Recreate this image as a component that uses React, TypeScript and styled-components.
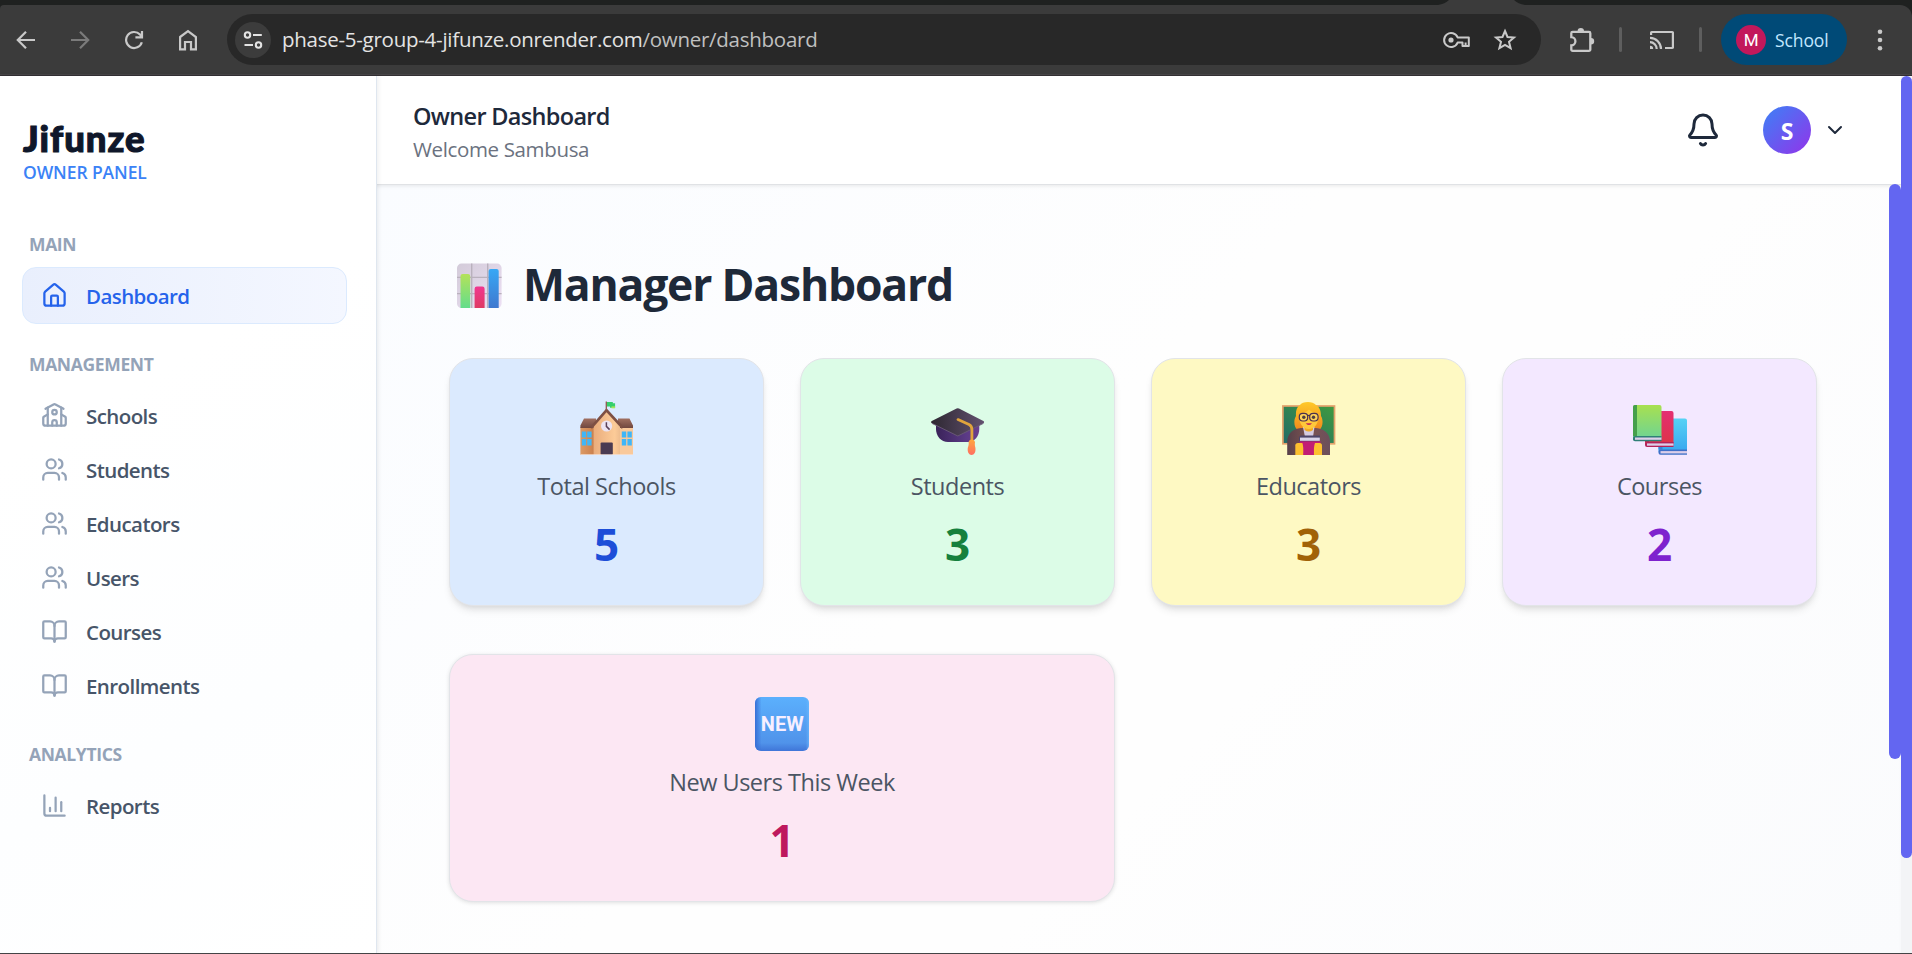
import React from 'react';
import styled, { createGlobalStyle } from 'styled-components';
import {
  Bell,
  BookOpen,
  ChartColumn,
  ChevronDown,
  House,
  School,
  Users,
  type LucideIcon,
} from 'lucide-react';

const GlobalStyle = createGlobalStyle`
  *, *::before, *::after { box-sizing: border-box; }
  body {
    margin: 0;
    overflow: hidden;
    background: #ffffff;
    font-family: "Open Sans", "Noto Sans", sans-serif;
  }
`;

/* ---------- browser chrome ---------- */

const Screen = styled.div`
  display: flex;
  flex-direction: column;
  width: 100vw;
  height: 954px;
  overflow: hidden;
  border-bottom: 1px solid #444446;
`;

const TabStrip = styled.div`
  flex: none;
  height: 5px;
  padding-left: 1438px;
  background: #1f2120;
`;

const ActiveTabFoot = styled.svg`
  display: block;
`;

const ToolbarBack = styled.div`
  flex: none;
  background: #1f2120;
`;

const Toolbar = styled.div`
  display: flex;
  align-items: center;
  height: 71px;
  padding-bottom: 2px;
  background: #3b3b3b;
  border-radius: 4px 12px 0 0;
  box-shadow: inset 0 -1px 0 #333033, inset 0 -2px 0 #474547;
`;

const ToolbarIcon = styled.span<{ $dim?: boolean; $first?: boolean }>`
  flex: none;
  display: flex;
  align-items: center;
  justify-content: center;
  width: 54px;
  height: 54px;
  margin-left: ${(p) => (p.$first ? '-1px' : '0')};
  color: ${(p) => (p.$dim ? '#7b7b7b' : '#c9c9c9')};
`;

const AddressBar = styled.div`
  display: flex;
  align-items: center;
  width: 1314px;
  height: 51px;
  margin: 0 14px 0 12px;
  padding: 0 12px 0 8px;
  border-radius: 26px;
  background: #282828;
`;

const SiteInfo = styled.span`
  display: flex;
  align-items: center;
  justify-content: center;
  width: 36px;
  height: 36px;
  border-radius: 50%;
  background: #3c3c3c;
`;

const Url = styled.span`
  flex: 1;
  padding: 0 0 2px 11px;
  font-size: 20.5px;
  line-height: 28px;
  letter-spacing: -0.26px;
  color: #e3e3e3;
`;

const UrlPath = styled.span`
  color: #c0c0c0;
`;

const AddressAction = styled.span`
  display: flex;
  justify-content: center;
  width: 48px;
  color: #c9c9c9;
`;

const Divider = styled.span`
  flex: none;
  width: 3px;
  height: 25px;
  margin: 0 0 0 10px;
  border-radius: 2px;
  background: #5e5e5e;
`;

const CastCell = styled(ToolbarIcon)`
  margin-left: 13px;
`;

const ProfileChip = styled.div`
  display: flex;
  align-items: center;
  gap: 9px;
  width: 126px;
  height: 51px;
  margin-left: 19px;
  padding-left: 15px;
  border-radius: 26px;
  background: #004a77;
  color: #c2e7ff;
  font-size: 17.5px;
  letter-spacing: -0.1px;
`;

const ProfileInitial = styled.span`
  display: flex;
  align-items: center;
  justify-content: center;
  width: 30px;
  height: 30px;
  border-radius: 50%;
  background: #c2185b;
  color: #ffffff;
  font: 400 17px Roboto, sans-serif;
`;

const MenuCell = styled(ToolbarIcon)`
  margin-left: 6px;
`;

/* ---------- page shell ---------- */

const Page = styled.div`
  display: flex;
  flex: 1;
  min-height: 0;
`;

const Sidebar = styled.aside`
  flex: none;
  z-index: 2;
  display: flex;
  flex-direction: column;
  width: 377px;
  padding: 40px 29px 0 22px;
  border-right: 1px solid #dfe6ef;
  background: linear-gradient(150deg, #ffffff 0%, #ffffff 35%, #fdfeff 70%, #ffffff 100%);
  box-shadow: 1px 0 5px rgba(15, 23, 42, 0.08);
`;

const Brand = styled.div`
  padding-left: 1px;
  font-family: Lato, "Open Sans", sans-serif;
  font-size: 36.5px;
  font-weight: 900;
  line-height: 44px;
  letter-spacing: 1px;
  color: #0f172a;
  -webkit-text-stroke: 1.1px #0f172a;
`;

const BrandSub = styled.div`
  padding-left: 1px;
  font-size: 17.5px;
  font-weight: 600;
  line-height: 24px;
  letter-spacing: -0.1px;
  color: #3b82f6;
`;

const NavLabel = styled.div<{ $top: number }>`
  margin-top: ${(p) => p.$top}px;
  height: 24px;
  padding-left: 7px;
  font-size: 17.5px;
  font-weight: 700;
  line-height: 24px;
  letter-spacing: -0.35px;
  color: #94a3b8;
`;

const NavList = styled.nav`
  display: flex;
  flex-direction: column;
  margin-top: 12px;
`;

const NavItem = styled.a<{ $active?: boolean }>`
  display: flex;
  align-items: center;
  gap: 18px;
  height: ${(p) => (p.$active ? 57 : 54)}px;
  margin-top: ${(p) => (p.$active ? -1 : 0)}px;
  margin-bottom: ${(p) => (p.$active ? -1 : 0)}px;
  padding-left: 18px;
  border: 1px solid ${(p) => (p.$active ? '#dbeafe' : 'transparent')};
  border-radius: 14px;
  background: ${(p) => (p.$active ? 'linear-gradient(90deg, #e9effd, #f4f7ff)' : 'none')};
  font-size: 20.5px;
  font-weight: 600;
  letter-spacing: -0.58px;
  color: ${(p) => (p.$active ? '#2563eb' : '#475569')};

  svg { color: ${(p) => (p.$active ? '#2563eb' : '#94a3b8')}; }
`;

const NavText = styled.span`
  padding-top: 1px;
`;

const Main = styled.main`
  flex: 1;
  display: flex;
  flex-direction: column;
  min-width: 0;
`;

const Header = styled.header`
  flex: none;
  display: flex;
  align-items: center;
  height: 108px;
  padding: 0 54px 0 36px;
  background: #ffffff;
`;

const HeaderText = styled.div`
  flex: 1;
  padding-top: 4px;
`;

const HeaderTitle = styled.div`
  font-size: 23.5px;
  font-weight: 600;
  line-height: 34px;
  letter-spacing: -0.68px;
  color: #1e293b;
`;

const HeaderWelcome = styled.div`
  font-size: 20.5px;
  line-height: 32px;
  letter-spacing: -0.36px;
  color: #6b7280;
`;

const HeaderActions = styled.div`
  display: flex;
  align-items: center;
  color: #1e293b;
`;

const Avatar = styled.span`
  display: flex;
  align-items: center;
  justify-content: center;
  width: 48px;
  height: 48px;
  margin: 0 12px 0 42px;
  padding-top: 2px;
  border-radius: 50%;
  background: linear-gradient(135deg, #3b82f6, #9333ea);
  color: #ffffff;
  font-size: 23px;
  font-weight: 700;
`;

const ScrollArea = styled.div`
  flex: 1;
  display: flex;
  min-height: 0;
  background: linear-gradient(135deg, #fafcff 0%, #fefefe 42%, #fefefe 60%, #fafbfd 100%);
  box-shadow: inset 0 1px 0 #e0e2e5, inset 0 4px 4px -2px rgba(0, 0, 0, 0.09);
`;

const Content = styled.section`
  flex: 1;
  padding: 67px 72px 0 72px;
`;

const ScrollTrack = styled.div<{ $filled?: boolean }>`
  flex: none;
  width: ${(p) => (p.$filled ? 11 : 12)}px;
  background: ${(p) => (p.$filled ? '#f3f4f6' : 'transparent')};
`;

const ScrollThumb = styled.div<{ $length: number }>`
  height: ${(p) => p.$length}px;
  border-radius: 6px;
  background: #6366f1;
`;

const PageTitle = styled.h1`
  display: flex;
  align-items: center;
  gap: 21px;
  height: 68px;
  margin: 0 0 39px;
  padding-left: 8px;
  font-size: 44.5px;
  font-weight: 700;
  letter-spacing: -1.2px;
  line-height: 60px;
  color: #1e2939;
`;

const PageTitleText = styled.span`
  padding-bottom: 2px;
`;

const CardGrid = styled.div`
  display: grid;
  grid-template-columns: repeat(4, 315px);
  column-gap: 36px;
  row-gap: 48px;
`;

const Card = styled.article<{ $bg: string; $wide?: boolean }>`
  grid-column: span ${(p) => (p.$wide ? 2 : 1)};
  display: flex;
  flex-direction: column;
  align-items: center;
  height: 248px;
  padding-top: 42px;
  border: 1px solid #e2e4e8;
  border-radius: 24px;
  background: ${(p) => p.$bg};
  box-shadow: ${(p) =>
    p.$wide
      ? '0 1px 4px rgba(0, 0, 0, 0.12)'
      : '0 6px 9px -2px rgba(0, 0, 0, 0.1), 0 3px 6px -3px rgba(0, 0, 0, 0.1)'};
`;

const CardLabel = styled.div`
  margin-top: 13px;
  font-size: 23.5px;
  line-height: 36px;
  letter-spacing: -0.48px;
  color: #4b5563;
`;

const CardValue = styled.div<{ $color: string }>`
  margin-top: 13px;
  font-size: 44px;
  font-weight: 700;
  line-height: 54px;
  color: ${(p) => p.$color};
`;

/* ---------- toolbar drawings ---------- */

const Arrow = ({ flip }: { flip?: boolean }) => (
  <svg width="20" height="20" viewBox="0 0 20 20" fill="none" stroke="currentColor" strokeWidth="2.2">
    <path d={flip ? 'M1 10H18M10 1.8 18.2 10 10 18.2' : 'M19 10H2M10 1.8 1.8 10 10 18.2'} />
  </svg>
);

const Reload = () => (
  <svg width="20" height="20" viewBox="0 0 20 20" fill="none" stroke="currentColor" strokeWidth="2.2">
    <path d="M17.8 12.2A8 8 0 1 1 16 4.6L17.6 6.4M18 1V7.4H11.4" />
  </svg>
);

const HomeGlyph = () => (
  <svg width="20" height="22" viewBox="0 0 20 22" fill="none" stroke="currentColor" strokeWidth="2.2">
    <path d="M2.1 8 10 2.2 17.9 8V20.4H13V13H7V20.4H2.1Z" />
  </svg>
);

const Tune = () => (
  <svg width="20" height="20" viewBox="0 0 20 20" fill="none" stroke="#e3e3e3" strokeWidth="2.1">
    <circle cx="4.5" cy="5" r="2.7" />
    <path d="M10 5H18.8M1.5 15H10" />
    <circle cx="15.5" cy="15" r="2.7" />
  </svg>
);

const Key = () => (
  <svg width="28" height="18" viewBox="0 0 28 18" fill="none" stroke="currentColor" strokeWidth="2">
    <path d="M14.6 6.4A7 7 0 1 0 14.6 11.6H19.5V15H25.8V6.4Z" strokeLinejoin="round" />
    <path d="M22.6 15V11.5" />
    <circle cx="8" cy="9" r="2.6" fill="currentColor" stroke="none" />
  </svg>
);

const Star = () => (
  <svg width="24" height="23" viewBox="0 0 24 23" fill="none" stroke="currentColor" strokeWidth="2">
    <path d="M12 3 14.5 9 21 9.5 16 13.8 17.6 20.2 12 16.8 6.4 20.2 8 13.8 3 9.5 9.5 9Z" />
  </svg>
);

const Extension = () => (
  <svg width="26" height="26" viewBox="0 0 26 26" fill="none" stroke="currentColor" strokeWidth="2.3">
    <path
      d="M3.6 4.9H20a1.3 1.3 0 0 1 1.3 1.3V22.6a1.3 1.3 0 0 1-1.3 1.3H3.6a1.3 1.3 0 0 1-1.3-1.3V18.4a4 4 0 0 0 0-8.2V6.2a1.3 1.3 0 0 1 1.3-1.3Z"
    />
    <path d="M8.6 4.2a3.2 3.2 0 0 1 6.4 0ZM22 11a3.2 3.2 0 0 1 0 6.4Z" fill="currentColor" stroke="none" />
  </svg>
);

const Cast = () => (
  <svg width="26" height="20" viewBox="0 0 26 20" fill="none" stroke="currentColor" strokeWidth="2.2">
    <path d="M2.1 5V2.6A.6.6 0 0 1 2.7 2H23.3a.6.6 0 0 1 .6.6V17.4a.6.6 0 0 1-.6.6H16" />
    <path d="M1 7.9A11 11 0 0 1 12 19M1 12.2A6.7 6.7 0 0 1 7.7 19" />
    <path d="M1 15.8A3.2 3.2 0 0 1 4.2 19H1Z" fill="currentColor" stroke="none" />
  </svg>
);

const Dots = () => (
  <svg width="6" height="22" viewBox="0 0 6 22" fill="currentColor">
    <circle cx="3" cy="2.8" r="2.3" />
    <circle cx="3" cy="11" r="2.3" />
    <circle cx="3" cy="19.2" r="2.3" />
  </svg>
);

/* ---------- emoji drawings ---------- */

const ChartEmoji = () => (
  <svg width="45" height="45" viewBox="0 0 45 45">
    <defs>
      <linearGradient id="ceBg" x1="0" y1="0" x2="1" y2="1">
        <stop offset="0" stopColor="#d3cbd9" />
        <stop offset="1" stopColor="#ece0f4" />
      </linearGradient>
      <linearGradient id="ceGreen" x1="0" y1="0" x2="0" y2="1">
        <stop offset="0" stopColor="#b4e25a" />
        <stop offset="1" stopColor="#63dd8b" />
      </linearGradient>
      <linearGradient id="cePink" x1="0" y1="0" x2="0" y2="1">
        <stop offset="0" stopColor="#f0368f" />
        <stop offset="1" stopColor="#de3a63" />
      </linearGradient>
      <linearGradient id="ceBlue" x1="0" y1="0" x2="0" y2="1">
        <stop offset="0" stopColor="#38a8f5" />
        <stop offset="1" stopColor="#3f78cf" />
      </linearGradient>
    </defs>
    <rect y=".6" width="44.6" height="44.4" rx="4.5" fill="url(#ceBg)" />
    <path d="M14.7 .6V45M30.7 .6V45M0 14.4H44.6M0 30.6H44.6" stroke="#b9b1bd" strokeWidth="1.4" />
    <path d="M3.5 45V13.1a2.2 2.2 0 0 1 2.2-2.2H11a2.2 2.2 0 0 1 2.2 2.2V45Z" fill="url(#ceGreen)" />
    <path d="M17.6 45V25.8A2.2 2.2 0 0 1 19.8 23.6h5.6a2.2 2.2 0 0 1 2.2 2.2V45Z" fill="url(#cePink)" />
    <path d="M31.6 45V8.1a2.2 2.2 0 0 1 2.2-2.2h5.7a2.2 2.2 0 0 1 2.2 2.2V45Z" fill="url(#ceBlue)" />
  </svg>
);

const SchoolEmoji = () => (
  <svg width="54" height="54" viewBox="0 0 54 54">
    <defs>
      <linearGradient id="seWall" x1="0" y1="0" x2="1" y2="0">
        <stop offset="0" stopColor="#e9ac7c" />
        <stop offset=".8" stopColor="#fccb98" />
        <stop offset="1" stopColor="#eebd8f" />
      </linearGradient>
      <linearGradient id="seLeft" x1="0" y1="0" x2="1" y2="0">
        <stop offset="0" stopColor="#dc9a65" />
        <stop offset="1" stopColor="#c97f4d" />
      </linearGradient>
      <linearGradient id="seRoof" x1="0" y1="0" x2="0" y2="1">
        <stop offset="0" stopColor="#a06f60" />
        <stop offset="1" stopColor="#70473f" />
      </linearGradient>
    </defs>
    <rect x=".4" y="26" width="14" height="28" fill="url(#seLeft)" />
    <rect x="39" y="26" width="14" height="28" fill="#f9c99b" />
    <path d="M4 17.6H16V27H.4V24.6ZM49.5 17.6H38V27H53V24.6Z" fill="url(#seRoof)" />
    <path d="M13.6 54V23.5L26.5 10 40 23.5V54Z" fill="url(#seWall)" />
    <path d="M26.5 7.2 42.2 24.2V28.2L26.5 11.2 11.6 28.2V24.2Z" fill="#7e5044" />
    <path d="M26.3.6V9" stroke="#8d5b4c" strokeWidth="1.3" />
    <path d="M27 1h5.8v1.3h2.3v4.5H30V5.5h-3Z" fill="#35cf6d" />
    <path d="M31.5 5.4h3.6v1.9h-3.6Z" fill="#a5e65b" />
    <circle cx="26.6" cy="25" r="5.6" fill="#ece3f2" />
    <path d="M26.4 21.2V25.4L29.6 28.6" fill="none" stroke="#5a4058" strokeWidth="1.5" />
    <path d="M1.8 30.5h4.4v6H1.8ZM7.2 30.5h4.4v6H7.2ZM1.8 38h4.4v6.4H1.8ZM7.2 38h4.4v6.4H7.2Z" fill="#3fb6f8" />
    <path d="M41.8 30.5h4.4v6h-4.4ZM47.4 30.5h4.4v6h-4.4ZM41.8 38h4.4v6.4h-4.4ZM47.4 38h4.4v6.4h-4.4Z" fill="#3fb6f8" />
    <rect x="20.6" y="41.6" width="12.2" height="12.4" rx="1" fill="#4a3b52" />
    <path d="M.4 53.6H53" stroke="#f1e2dc" strokeWidth=".8" />
  </svg>
);

const CapEmoji = () => (
  <svg width="54" height="54" viewBox="0 0 54 54">
    <defs>
      <linearGradient id="gcBase" x1="0" y1="0" x2="1" y2="0">
        <stop offset="0" stopColor="#3a2359" />
        <stop offset=".7" stopColor="#5b3a86" />
        <stop offset="1" stopColor="#6b3f8d" />
      </linearGradient>
      <linearGradient id="gcTop" x1="0" y1="0" x2="1" y2="0">
        <stop offset="0" stopColor="#2d2731" />
        <stop offset="1" stopColor="#62516f" />
      </linearGradient>
      <linearGradient id="gcTassel" x1="0" y1="0" x2="0" y2="1">
        <stop offset="0" stopColor="#ffa63d" />
        <stop offset="1" stopColor="#ff6f63" />
      </linearGradient>
    </defs>
    <path d="M5 24H48.3V28C48.3 35 43.5 41 37 41H17C10 41 5 35 5 28Z" fill="url(#gcBase)" />
    <path d="M25.6 7.4a3 3 0 0 1 2.4 0L52.4 20a1.2 1.2 0 0 1 0 2.2L28.3 34.5a3 3 0 0 1-2.8 0L.8 22.2a1.2 1.2 0 0 1 0-2.2Z" fill="url(#gcTop)" />
    <path d="M1 22.4 26.8 35 52.4 22.4" fill="none" stroke="#6b5a78" strokeWidth=".9" />
    <path d="M27 18.6 38 23.6Q40.9 25 40.9 28.5V42" fill="none" stroke="#e0a43c" strokeWidth="2.8" strokeLinecap="round" />
    <path d="M37.6 41a3.3 3.3 0 0 1 6.4 0c-.3 2-.2 3.8.4 5.8.6 4.2-1.2 7.2-3.8 7.2s-4.4-3-3.8-7.2c.8-2 1.1-3.8.8-5.8Z" fill="url(#gcTassel)" />
  </svg>
);

const TeacherEmoji = () => (
  <svg width="54" height="54" viewBox="0 0 54 54">
    <defs>
      <linearGradient id="teBoard" x1="1" y1="0" x2="0" y2="1">
        <stop offset="0" stopColor="#3f9a3f" />
        <stop offset="1" stopColor="#216a68" />
      </linearGradient>
      <linearGradient id="teHair" x1="0" y1="0" x2="0" y2="1">
        <stop offset="0" stopColor="#ffc928" />
        <stop offset="1" stopColor="#f08a1c" />
      </linearGradient>
      <linearGradient id="teCoat" x1="0" y1="0" x2="1" y2="0">
        <stop offset="0" stopColor="#57404a" />
        <stop offset=".5" stopColor="#7c5450" />
        <stop offset="1" stopColor="#6c4f5c" />
      </linearGradient>
    </defs>
    <rect x=".9" y="5" width="51.6" height="37.8" fill="url(#teBoard)" stroke="#e3a26c" strokeWidth="1.7" />
    <path d="M18 4C20 .4 30.5-.4 34 4c3.6 2 5 6 5 11 2.6 4 2 12-2 14H16c-4-2-4.8-9.5-2-14-.4-5 .6-9 4-11Z" fill="url(#teHair)" />
    <path d="M5.2 54V41C5.2 32 11 28 19 27H34C42 28 48 32 48 41V54Z" fill="url(#teCoat)" />
    <path d="M21 26H32.5L31 36H23Z" fill="#d5cbe0" />
    <path d="M22.5 22H31V29Q27 32 22.5 29Z" fill="#f2aa22" />
    <path d="M17 13C20 12.5 24 11.5 27 8.5 30 11 33 12.5 36.5 13 37 22 33 28 26.8 28S16.6 22 17 13Z" fill="#fec93a" />
    <circle cx="21.8" cy="16.3" r="1.7" fill="#2d1d23" />
    <circle cx="31.5" cy="16.3" r="1.7" fill="#2d1d23" />
    <rect x="17.3" y="12.4" width="8.4" height="7.6" rx="3.4" fill="#fff" fillOpacity=".15" stroke="#4a3050" strokeWidth="1.2" />
    <rect x="27.7" y="12.4" width="8.4" height="7.6" rx="3.4" fill="#fff" fillOpacity=".15" stroke="#4a3050" strokeWidth="1.2" />
    <path d="M25.5 14.5H28" stroke="#4a3050" strokeWidth="1.2" />
    <path d="M23.7 22.2H30Q26.9 26 23.7 22.2Z" fill="#c02a58" />
    <path d="M17 42V37Q17 34.5 19.5 34.5H38V42Z" fill="#4d4568" />
    <rect x="18" y="36.6" width="19.8" height="3.2" fill="#d9d4e8" />
    <rect x="17.5" y="40.3" width="21" height="13.7" fill="#c21d74" />
    <path d="M13.3 54V44.5Q13.3 42 16 42H20.4Q21.6 45 21.2 54Z" fill="#fdc02f" />
    <path d="M40 54V44.5Q40 42 37.5 42H33Q31.6 45 32 54Z" fill="#fdc02f" />
  </svg>
);

const Book = ({ x, y, cover, spine, fold }: { x: number; y: number; cover: string; spine: string; fold: string }) => (
  <g transform={`translate(${x} ${y})`}>
    <path d="M2.2 0H26.5A2 2 0 0 1 28.5 2V33H0V2.2A2.2 2.2 0 0 1 2.2 0Z" fill={cover} />
    <path d="M1.8 0H4V31H0V1.8A1.8 1.8 0 0 1 1.8 0Z" fill={spine} />
    <path d="M2 31H28.5V36.2H2A2 2 0 0 1 0 34.2V33A2 2 0 0 1 2 31Z" fill={fold} />
    <path d="M2 32.5H28.5V34.8H2Z" fill="#dccfe9" />
  </g>
);

const BooksEmoji = () => (
  <svg width="54" height="54" viewBox="0 0 54 54">
    <defs>
      <linearGradient id="beGreen" x1="0" y1="0" x2="0" y2="1">
        <stop offset="0" stopColor="#a8e050" />
        <stop offset="1" stopColor="#6fd492" />
      </linearGradient>
      <linearGradient id="beRed" x1="0" y1="0" x2="0" y2="1">
        <stop offset="0" stopColor="#e52f73" />
        <stop offset="1" stopColor="#dc3448" />
      </linearGradient>
      <linearGradient id="beBlue" x1="0" y1="0" x2="0" y2="1">
        <stop offset="0" stopColor="#56d2f5" />
        <stop offset="1" stopColor="#38a7ef" />
      </linearGradient>
    </defs>
    <Book x={25.5} y={17.6} cover="url(#beBlue)" spine="#3a83d6" fold="#3f70c8" />
    <Book x={12} y={9.9} cover="url(#beRed)" spine="#b8244f" fold="#b3235a" />
    <Book x={0} y={4} cover="url(#beGreen)" spine="#459f4b" fold="#2f7f77" />
  </svg>
);

const NewWord = styled.text`
  font-family: Roboto, sans-serif;
  font-size: 20px;
  font-weight: 700;
  fill: #f7efff;
`;

const NewEmoji = () => (
  <svg width="54" height="54" viewBox="0 0 54 54">
    <defs>
      <linearGradient id="neFace" x1="0" y1="0" x2="0" y2="1">
        <stop offset="0" stopColor="#5bb0fd" />
        <stop offset=".85" stopColor="#5093ea" />
        <stop offset="1" stopColor="#3f75d8" />
      </linearGradient>
      <linearGradient id="neEdge" x1="0" y1="0" x2="1" y2="0">
        <stop offset="0" stopColor="#376fd6" />
        <stop offset=".12" stopColor="#376fd6" stopOpacity="0" />
        <stop offset=".94" stopColor="#6cbcff" stopOpacity="0" />
        <stop offset="1" stopColor="#6cbcff" stopOpacity=".6" />
      </linearGradient>
    </defs>
    <rect width="54" height="54" rx="6" fill="url(#neFace)" />
    <rect width="54" height="54" rx="6" fill="url(#neEdge)" />
    <NewWord x="27.3" y="34" textAnchor="middle" textLength="43">NEW</NewWord>
  </svg>
);

/* ---------- data ---------- */

interface NavEntry {
  label: string;
  icon: LucideIcon;
  active?: boolean;
}

const sections: { title: string; top: number; items: NavEntry[] }[] = [
  { title: 'MAIN', top: 48, items: [{ label: 'Dashboard', icon: House, active: true }] },
  {
    title: 'MANAGEMENT',
    top: 29,
    items: [
      { label: 'Schools', icon: School },
      { label: 'Students', icon: Users },
      { label: 'Educators', icon: Users },
      { label: 'Users', icon: Users },
      { label: 'Courses', icon: BookOpen },
      { label: 'Enrollments', icon: BookOpen },
    ],
  },
  { title: 'ANALYTICS', top: 30, items: [{ label: 'Reports', icon: ChartColumn }] },
];

const stats = [
  { label: 'Total Schools', value: 5, bg: '#dbeafe', color: '#1d4ed8', Emoji: SchoolEmoji },
  { label: 'Students', value: 3, bg: '#dcfce7', color: '#15803d', Emoji: CapEmoji },
  { label: 'Educators', value: 3, bg: '#fef9c3', color: '#a16207', Emoji: TeacherEmoji },
  { label: 'Courses', value: 2, bg: '#f3e8ff', color: '#7e22ce', Emoji: BooksEmoji },
  { label: 'New Users This Week', value: 1, bg: '#fce7f3', color: '#be185d', Emoji: NewEmoji, wide: true },
];

export default function App() {
  return (
    <Screen>
      <GlobalStyle />
      <TabStrip>
        <ActiveTabFoot width="90" height="5" viewBox="0 0 90 5">
          <path d="M0 5Q7 4 11 0H76Q80 4 87 5Z" fill="#3b3b3b" />
        </ActiveTabFoot>
      </TabStrip>
      <ToolbarBack>
        <Toolbar>
          <ToolbarIcon $first><Arrow /></ToolbarIcon>
          <ToolbarIcon $dim><Arrow flip /></ToolbarIcon>
          <ToolbarIcon><Reload /></ToolbarIcon>
          <ToolbarIcon><HomeGlyph /></ToolbarIcon>
          <AddressBar>
            <SiteInfo><Tune /></SiteInfo>
            <Url>
              phase-5-group-4-jifunze.onrender.com<UrlPath>/owner/dashboard</UrlPath>
            </Url>
            <AddressAction><Key /></AddressAction>
            <AddressAction><Star /></AddressAction>
          </AddressBar>
          <ToolbarIcon><Extension /></ToolbarIcon>
          <Divider />
          <CastCell><Cast /></CastCell>
          <Divider />
          <ProfileChip>
            <ProfileInitial>M</ProfileInitial>
            School
          </ProfileChip>
          <MenuCell><Dots /></MenuCell>
        </Toolbar>
      </ToolbarBack>

      <Page>
        <Sidebar>
          <Brand>Jifunze</Brand>
          <BrandSub>OWNER PANEL</BrandSub>
          {sections.map((section) => (
            <React.Fragment key={section.title}>
              <NavLabel $top={section.top}>{section.title}</NavLabel>
              <NavList>
                {section.items.map(({ label, icon: Icon, active }) => (
                  <NavItem key={label} $active={active}>
                    <Icon size={27} strokeWidth={2} />
                    <NavText>{label}</NavText>
                  </NavItem>
                ))}
              </NavList>
            </React.Fragment>
          ))}
        </Sidebar>

        <Main>
          <Header>
            <HeaderText>
              <HeaderTitle>Owner Dashboard</HeaderTitle>
              <HeaderWelcome>Welcome Sambusa</HeaderWelcome>
            </HeaderText>
            <HeaderActions>
              <Bell size={36} strokeWidth={2} />
              <Avatar>S</Avatar>
              <ChevronDown size={24} strokeWidth={2} />
            </HeaderActions>
          </Header>
          <ScrollArea>
            <Content>
              <PageTitle>
                <ChartEmoji />
                <PageTitleText>Manager Dashboard</PageTitleText>
              </PageTitle>
              <CardGrid>
                {stats.map(({ label, value, bg, color, Emoji, wide }) => (
                  <Card key={label} $bg={bg} $wide={wide}>
                    <Emoji />
                    <CardLabel>{label}</CardLabel>
                    <CardValue $color={color}>{value}</CardValue>
                  </Card>
                ))}
              </CardGrid>
            </Content>
            <ScrollTrack>
              <ScrollThumb $length={575} />
            </ScrollTrack>
          </ScrollArea>
        </Main>
        <ScrollTrack $filled>
          <ScrollThumb $length={782} />
        </ScrollTrack>
      </Page>
    </Screen>
  );
}
